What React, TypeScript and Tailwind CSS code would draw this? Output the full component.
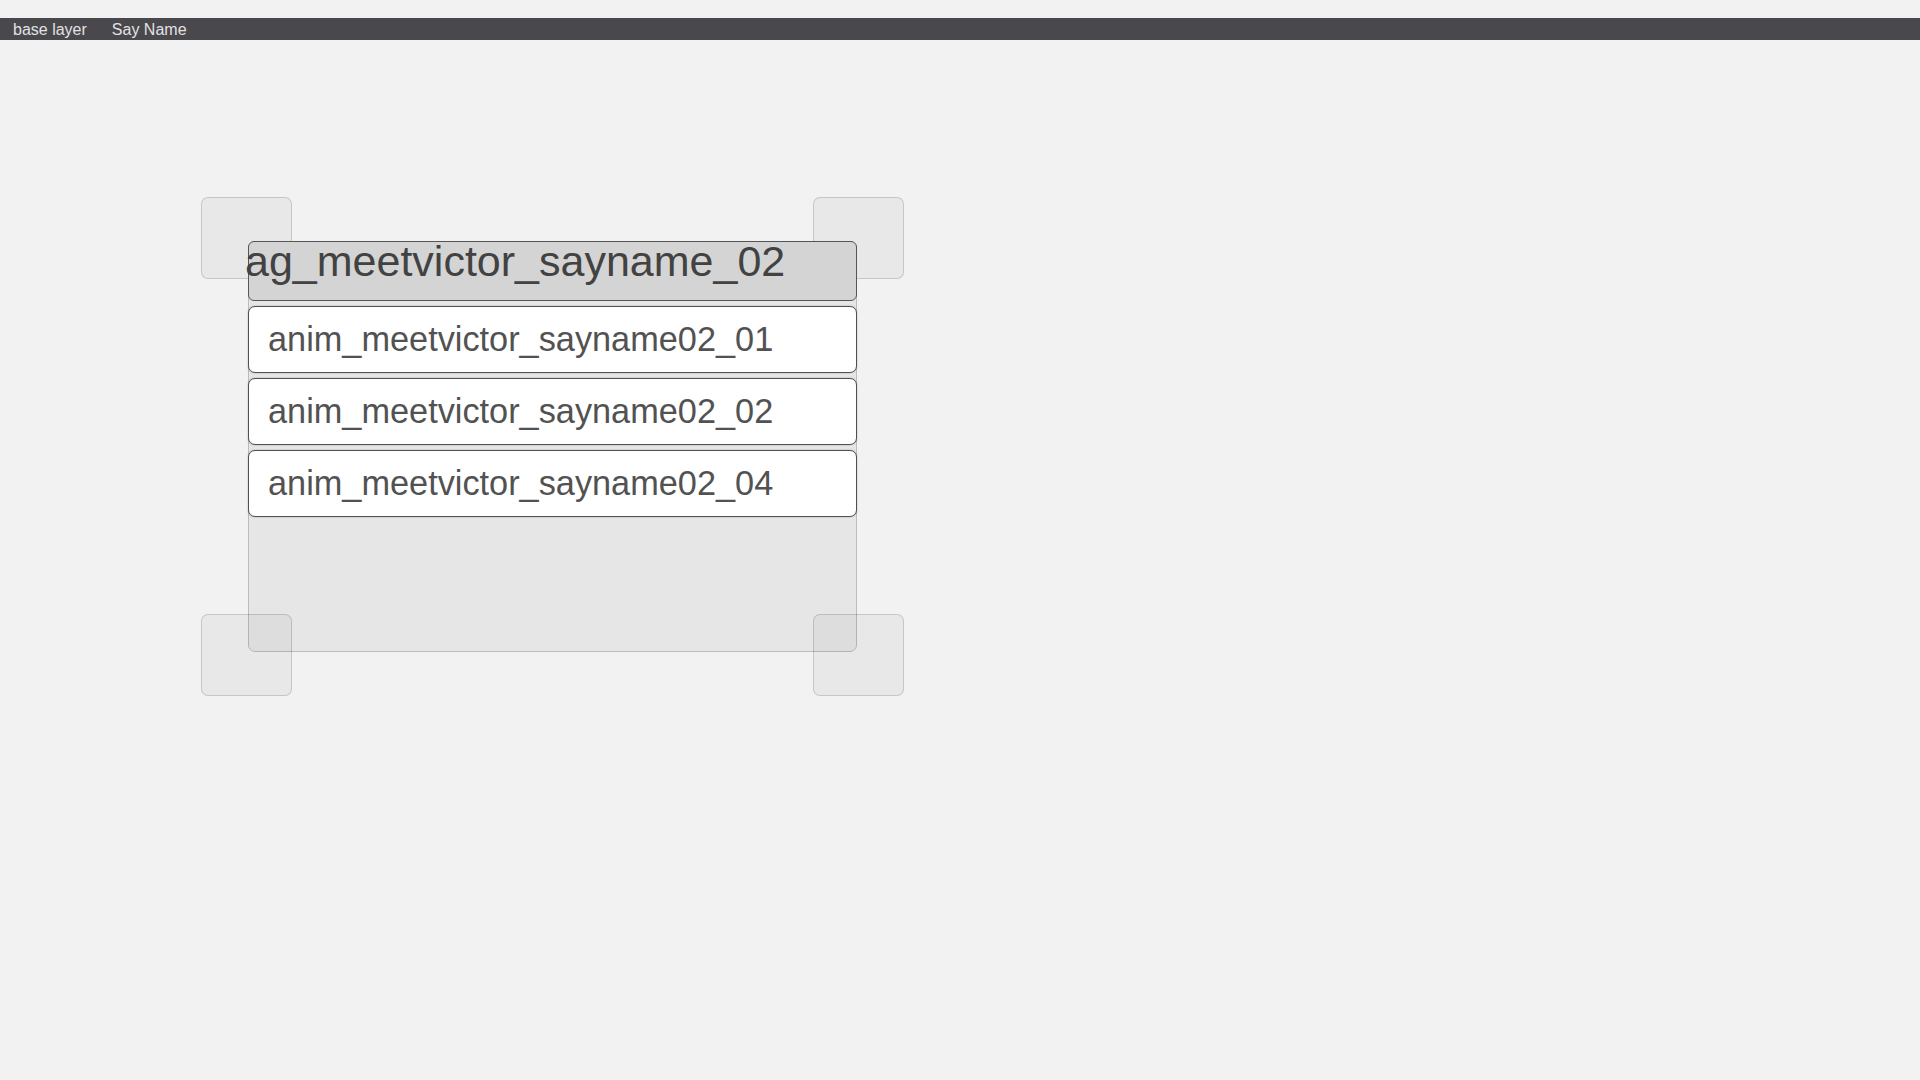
const rows = [
  "anim_meetvictor_sayname02_01",
  "anim_meetvictor_sayname02_02",
  "anim_meetvictor_sayname02_04",
];

function Handle({ className }: { className: string }) {
  return (
    <div
      className={
        "absolute z-10 w-[91px] h-[82px] rounded-[7px] border border-black/15 bg-black/[0.04] " +
        className
      }
    />
  );
}

export default function App() {
  return (
    <div
      className="relative w-full min-h-screen bg-[#f2f2f2] pt-[18px]"
      style={{ fontFamily: '"Liberation Sans", Arial, sans-serif' }}
    >
      {/* top bar */}
      <div className="flex h-[22px] gap-[25px] overflow-hidden bg-[#49484d] pl-[13px] text-[16px] leading-[24px] text-[#e2e2e2]">
        <span>base layer</span>
        <span>Say Name</span>
      </div>

      {/* node on canvas */}
      <div className="absolute left-[201px] top-[197px] w-[703px] h-[499px]">
        <Handle className="left-0 top-0" />
        <Handle className="right-0 top-0" />
        <Handle className="left-0 bottom-0" />
        <Handle className="right-0 bottom-0" />

        <div className="ml-[47px] mt-[44px] w-[609px] h-[411px] rounded-[7px] border border-[#bcbcbc] bg-[#e6e6e6]">
          <div className="relative z-20 -mt-px -mx-px h-[60px] rounded-[6px] border border-[#555] bg-[#d4d4d4]">
            <div className="-ml-[4px] -mt-[2px] whitespace-nowrap text-[43px] leading-none text-[#424242]">
              ag_meetvictor_sayname_02
            </div>
          </div>
          <div className="flex flex-col gap-[5px] mt-[5px] -mx-px">
            {rows.map((r) => (
              <div
                key={r}
                className="relative z-20 flex h-[67px] items-center rounded-[7px] border border-[#505050] bg-white pl-[19px] shadow-[0_0_2px_rgba(0,0,0,0.25)]"
              >
                <span className="whitespace-nowrap text-[34.3px] text-[#525252]">{r}</span>
              </div>
            ))}
          </div>
        </div>
      </div>
    </div>
  );
}
